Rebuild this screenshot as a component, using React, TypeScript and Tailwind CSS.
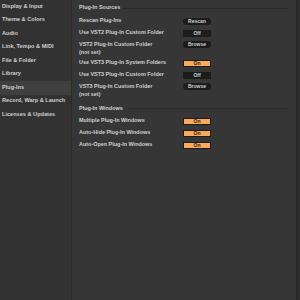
import React from "react";

const sidebar = [
  "Display & Input",
  "Theme & Colors",
  "Audio",
  "Link, Tempo & MIDI",
  "File & Folder",
  "Library",
  "Plug-Ins",
  "Record, Warp & Launch",
  "Licenses & Updates",
];

type Kind = "pill" | "off" | "on";

function Btn({ kind, label }: { kind: Kind; label: string }) {
  if (kind === "on")
    return (
      <div className="w-[28px] h-[7px] flex items-center justify-center bg-[#fca95a] border border-[#1c1c1c] text-[#1e1e1e] text-[5px] leading-none font-semibold">
        {label}
      </div>
    );
  if (kind === "off")
    return (
      <div className="w-[28px] h-[7px] flex items-center justify-center bg-[#1c1c1c] text-[#d0d0d0] text-[5px] leading-none font-semibold">
        {label}
      </div>
    );
  return (
    <div className="w-[28px] h-[7px] flex items-center justify-center rounded-full bg-[#1c1c1c] text-[#d0d0d0] text-[5px] leading-none font-semibold">
      {label}
    </div>
  );
}

function Row({ label, sub, kind, btn }: { label: string; sub?: string; kind: Kind; btn: string }) {
  return (
    <div className={sub ? "flex flex-col h-[18px] justify-start pt-[1px]" : "flex h-[12px] items-center"}>
      <div className="flex items-center h-[9px]">
        <div className="w-[104px] text-[5.45px] leading-none text-[#cfcfcf] font-semibold whitespace-nowrap">{label}</div>
        <Btn kind={kind} label={btn} />
      </div>
      {sub && <div className="text-[5.45px] leading-none text-[#cfcfcf] font-semibold h-[9px] flex items-center">{sub}</div>}
    </div>
  );
}

function Header({ title, cls }: { title: string; cls: string }) {
  return (
    <div className={"flex items-center gap-[3px] pr-[8px] " + cls}>
      <div className="text-[5.45px] leading-none text-[#cfcfcf] font-semibold whitespace-nowrap">{title}</div>
      <div className="flex-1 h-px bg-[#2a2a2a]" />
    </div>
  );
}

export default function App() {
  return (
    <div
      className="w-[300px] h-[300px] flex bg-[#363636] overflow-hidden"
      style={{ fontFamily: '"Liberation Sans", Arial, sans-serif' }}
    >
      <div className="w-[72px] h-full bg-[#323232] border-r border-[#2b2b2b] flex flex-col">
        {sidebar.map((s) => (
          <div
            key={s}
            className={
              "h-[13.5px] flex items-center pl-[2px] text-[5.6px] leading-none font-semibold whitespace-nowrap text-[#cfcfcf] " +
              (s === "Plug-Ins" ? "bg-[#3f3f3f]" : "")
            }
          >
            {s}
          </div>
        ))}
      </div>
      <div className="flex-1 flex flex-col pl-[7px] pt-[1px]">
        <Header title="Plug-In Sources" cls="h-[14px]" />
        <Row label="Rescan Plug-Ins" kind="pill" btn="Rescan" />
        <Row label="Use VST2 Plug-In Custom Folder" kind="off" btn="Off" />
        <Row label="VST2 Plug-In Custom Folder" sub="(not set)" kind="pill" btn="Browse" />
        <Row label="Use VST3 Plug-In System Folders" kind="on" btn="On" />
        <Row label="Use VST3 Plug-In Custom Folder" kind="off" btn="Off" />
        <Row label="VST3 Plug-In Custom Folder" sub="(not set)" kind="pill" btn="Browse" />
        <Header title="Plug-In Windows" cls="h-[16px] pt-[3px]" />
        <Row label="Multiple Plug-In Windows" kind="on" btn="On" />
        <Row label="Auto-Hide Plug-In Windows" kind="on" btn="On" />
        <Row label="Auto-Open Plug-In Windows" kind="on" btn="On" />
      </div>
      <div className="w-[4px] h-full bg-[#2c2c2c] border-l border-[#262626]" />
    </div>
  );
}
